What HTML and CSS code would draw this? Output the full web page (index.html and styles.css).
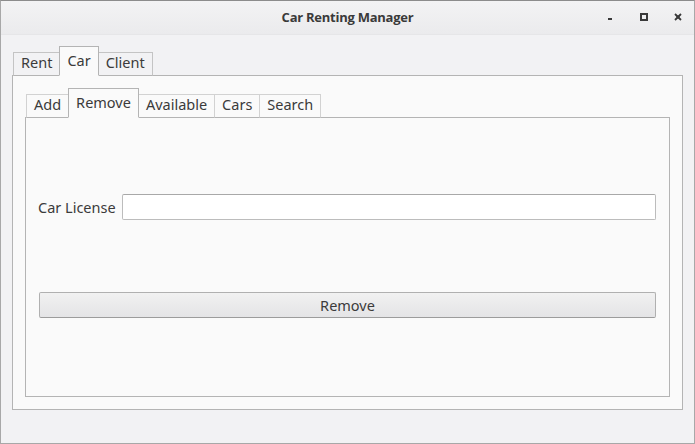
FILE: index.html
```html
<!DOCTYPE html>
<html>
<head>
<meta charset="utf-8">
<link rel="stylesheet" href="styles.css">
</head>
<body>
<div class="window">
  <div class="titlebar">
    <div></div>
    <div class="title">Car Renting Manager</div>
    <div class="controls">
      <svg class="ctl" width="16" height="16" viewBox="0 0 16 16"><rect x="6" y="9" width="4" height="2" fill="#3a3a3a"/></svg>
      <svg class="ctl" width="16" height="16" viewBox="0 0 16 16"><rect x="5" y="5" width="6" height="6" fill="none" stroke="#3a3a3a" stroke-width="2"/></svg>
      <svg class="ctl" width="16" height="16" viewBox="0 0 16 16"><path d="M5 5 L11 11 M11 5 L5 11" stroke="#3a3a3a" stroke-width="1.8" fill="none"/><rect x="6.5" y="6.5" width="3" height="3" fill="#3a3a3a"/></svg>
    </div>
  </div>
  <div class="content">
    <div class="tabwidget outer">
      <div class="tabbar">
        <div class="tab">Rent</div>
        <div class="tab active">Car</div>
        <div class="tab">Client</div>
      </div>
      <div class="pane outer-pane">
        <div class="tabwidget inner">
          <div class="tabbar">
            <div class="tab">Add</div>
            <div class="tab active">Remove</div>
            <div class="tab">Available</div>
            <div class="tab">Cars</div>
            <div class="tab">Search</div>
          </div>
          <div class="pane inner-pane">
            <div class="row">
              <span class="label">Car License</span>
              <div class="input"></div>
            </div>
            <div class="button">Remove</div>
          </div>
        </div>
      </div>
    </div>
  </div>
</div>
</body>
</html>
```

FILE: styles.css
```css
html, body {
  margin: 0;
  padding: 0;
  background: #f2f2f4;
}
body {
  font-family: "Noto Sans", "Open Sans", sans-serif;
  font-size: 14.5px;
  color: #3b3b3b;
}
.window {
  width: 695px;
  height: 444px;
  box-sizing: border-box;
  border: 1px solid #a8a8a8;
  border-top-color: #8c8c8c;
  display: flex;
  flex-direction: column;
  background: #f2f2f4;
}
.titlebar {
  height: 34px;
  box-sizing: border-box;
  background: linear-gradient(#f3f3f4, #ebebed);
  display: grid;
  grid-template-columns: 1fr auto 1fr;
  align-items: center;
  border-bottom: 1px solid #e6e6e8;
}
.title {
  font-family: "Open Sans", "Noto Sans", sans-serif;
  font-weight: bold;
  font-size: 13px;
  letter-spacing: -0.25px;
  color: #3a3a3a;
  margin-top: -2px;
}
.controls {
  justify-self: end;
  display: flex;
  gap: 18px;
  padding-right: 8px;
  margin-top: -2px;
}
.ctl {
  display: block;
}
.content {
  flex: 1;
  padding: 11px 11px 33px 11px;
  display: flex;
  flex-direction: column;
}
.tabwidget {
  display: flex;
  flex-direction: column;
  flex: 1;
}
.tabbar {
  display: flex;
  align-items: flex-end;
  padding-left: 1px;
  margin-bottom: -1px;
  position: relative;
  z-index: 1;
}
.tab {
  height: 22px;
  line-height: 19px;
  padding: 0 7px;
  border: 1px solid #c4c4c4;
  border-bottom: 1px solid #b4b4b4;
  border-left: none;
  background: #f2f2f4;
  box-sizing: content-box;
}
.tab:first-child {
  border-left: 1px solid #c4c4c4;
}
.tab.active {
  height: 28px;
  line-height: 27px;
  background: #fafafa;
  border: 1px solid #b4b4b4;
  border-bottom: 1px solid #fafafa;
  margin-left: -1px;
}
.tab.active + .tab {
  border-left: none;
}
.pane {
  flex: 1;
  background: #fafafa;
  border: 1px solid #b4b4b4;
  display: flex;
  flex-direction: column;
}
.outer-pane {
  padding: 12px;
}
.inner .tab {
  background: #fafafa;
  border-color: #d2d2d2;
  border-bottom-color: #b4b4b4;
}
.inner .tab.active {
  border-color: #b4b4b4;
  border-bottom-color: #fafafa;
}
.inner-pane {
  padding: 76px 13px 0 12px;
}
.row {
  display: flex;
  align-items: center;
  height: 26px;
}
.label {
  width: 84px;
  flex: none;
}
.input {
  flex: 1;
  height: 26px;
  box-sizing: border-box;
  background: #ffffff;
  border: 1px solid #bcbcbc;
  border-top-color: #a8a8a8;
  border-radius: 2px;
}
.button {
  margin-top: 72px;
  margin-left: 1px;
  height: 26px;
  box-sizing: border-box;
  border: 1px solid #b0b0b0;
  border-bottom-color: #9c9c9c;
  border-radius: 2px;
  background: linear-gradient(#f1f1f1, #e4e4e6);
  text-align: center;
  line-height: 24px;
}
```
